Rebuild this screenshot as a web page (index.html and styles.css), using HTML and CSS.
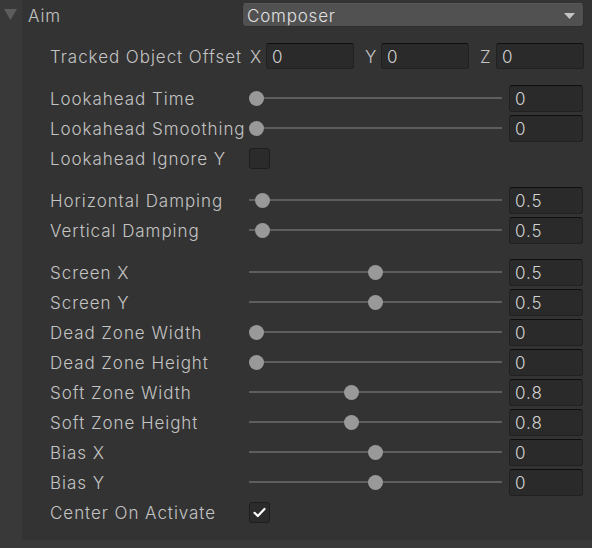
FILE: index.html
```html
<!DOCTYPE html>
<html>
<head>
<meta charset="utf-8">
<link rel="stylesheet" href="styles.css">
</head>
<body>
<div class="inspector">
  <div class="gutter">
    <svg class="foldout" width="13" height="11" viewBox="0 0 13 11"><path d="M0 0 H13 L6.5 11 Z" fill="#5d5d5d"/></svg>
  </div>
  <div class="panel">
    <div class="header">
      <span class="header-label">Aim</span>
      <div class="dropdown">
        <span>Composer</span>
        <svg width="11" height="6" viewBox="0 0 11 6"><path d="M0 0 H11 L5.5 6 Z" fill="#c4c4c4"/></svg>
      </div>
    </div>

    <div class="group">
      <div class="row">
        <span class="label">Tracked Object Offset</span>
        <div class="vector">
          <div class="vcell"><span class="axis">X</span><div class="field">0</div></div>
          <div class="vcell"><span class="axis">Y</span><div class="field">0</div></div>
          <div class="vcell"><span class="axis">Z</span><div class="field">0</div></div>
        </div>
      </div>
    </div>

    <div class="group">
      <div class="row">
        <span class="label">Lookahead Time</span>
        <div class="slider"><div class="track"><div class="knob" style="--p:0"></div></div><div class="field num">0</div></div>
      </div>
      <div class="row">
        <span class="label">Lookahead Smoothing</span>
        <div class="slider"><div class="track"><div class="knob" style="--p:0"></div></div><div class="field num">0</div></div>
      </div>
      <div class="row">
        <span class="label">Lookahead Ignore Y</span>
        <div class="checkbox"></div>
      </div>
    </div>

    <div class="group">
      <div class="row">
        <span class="label">Horizontal Damping</span>
        <div class="slider"><div class="track"><div class="knob" style="--p:0.025"></div></div><div class="field num">0.5</div></div>
      </div>
      <div class="row">
        <span class="label">Vertical Damping</span>
        <div class="slider"><div class="track"><div class="knob" style="--p:0.025"></div></div><div class="field num">0.5</div></div>
      </div>
    </div>

    <div class="group">
      <div class="row">
        <span class="label">Screen X</span>
        <div class="slider"><div class="track"><div class="knob" style="--p:0.5"></div></div><div class="field num">0.5</div></div>
      </div>
      <div class="row">
        <span class="label">Screen Y</span>
        <div class="slider"><div class="track"><div class="knob" style="--p:0.5"></div></div><div class="field num">0.5</div></div>
      </div>
      <div class="row">
        <span class="label">Dead Zone Width</span>
        <div class="slider"><div class="track"><div class="knob" style="--p:0"></div></div><div class="field num">0</div></div>
      </div>
      <div class="row">
        <span class="label">Dead Zone Height</span>
        <div class="slider"><div class="track"><div class="knob" style="--p:0"></div></div><div class="field num">0</div></div>
      </div>
      <div class="row">
        <span class="label">Soft Zone Width</span>
        <div class="slider"><div class="track"><div class="knob" style="--p:0.4"></div></div><div class="field num">0.8</div></div>
      </div>
      <div class="row">
        <span class="label">Soft Zone Height</span>
        <div class="slider"><div class="track"><div class="knob" style="--p:0.4"></div></div><div class="field num">0.8</div></div>
      </div>
      <div class="row">
        <span class="label">Bias X</span>
        <div class="slider"><div class="track"><div class="knob" style="--p:0.5"></div></div><div class="field num">0</div></div>
      </div>
      <div class="row">
        <span class="label">Bias Y</span>
        <div class="slider"><div class="track"><div class="knob" style="--p:0.5"></div></div><div class="field num">0</div></div>
      </div>
      <div class="row">
        <span class="label">Center On Activate</span>
        <div class="checkbox checked">
          <svg width="13" height="11" viewBox="0 0 13 11"><path d="M1.5 5.8 L4.8 9 L11.5 2" fill="none" stroke="#ffffff" stroke-width="2.2" stroke-linecap="round" stroke-linejoin="round"/></svg>
        </div>
      </div>
    </div>
  </div>
</div>
</body>
</html>
```

FILE: styles.css
```css
html, body {
  margin: 0;
  padding: 0;
  background: #393939;
}

body {
  width: 592px;
  height: 548px;
  overflow: hidden;
  font-family: Inter, "Noto Sans", sans-serif;
  font-size: 17px;
  font-weight: 350;
  letter-spacing: 0.95px;
  color: #c4c4c4;
}

.inspector {
  display: flex;
  height: 540px;
}

.gutter {
  width: 22px;
  flex: none;
}

.foldout {
  display: block;
  margin: 9px 0 0 4px;
}

.panel {
  flex: 1;
  background: #333333;
  display: flex;
  flex-direction: column;
}

.header {
  height: 29px;
  display: flex;
  align-items: center;
  padding-left: 6px;
  box-sizing: border-box;
}

.header-label {
  width: 214px;
  padding-top: 2px;
}

.dropdown {
  width: 342px;
  height: 24px;
  margin-top: 1px;
  box-sizing: border-box;
  background: #515151;
  border: 1px solid #2f2f2f;
  border-top-color: #575757;
  border-radius: 4px;
  display: flex;
  align-items: center;
  justify-content: space-between;
  padding: 1px 8px 0 4px;
  color: #e0e0e0;
  letter-spacing: 0.8px;
}

.group {
  margin-top: 12px;
  padding-left: 28px;
  display: flex;
  flex-direction: column;
}

.row {
  height: 30px;
  display: flex;
  align-items: center;
}

.label {
  width: 199px;
  flex: none;
  white-space: nowrap;
  padding-top: 2px;
}

.vector {
  width: 335px;
  display: grid;
  grid-template-columns: 1fr 1fr 1fr;
  column-gap: 10px;
}

.vcell {
  display: flex;
  align-items: center;
}

.axis {
  width: 16px;
  flex: none;
  padding-left: 1px;
  padding-top: 2px;
}

.field {
  flex: 1;
  height: 26px;
  box-sizing: border-box;
  background: #2a2a2a;
  border: 1px solid #212121;
  border-top-color: #0f0f0f;
  border-radius: 3px;
  padding: 1px 0 0 5px;
  display: flex;
  align-items: center;
  color: #d2d2d2;
}

.slider {
  width: 335px;
  display: flex;
  align-items: center;
}

.track {
  position: relative;
  width: 253px;
  height: 2px;
  background: #5e5e5e;
}

.knob {
  position: absolute;
  top: -6.5px;
  left: calc(var(--p) * (100% - 15px));
  width: 15px;
  height: 15px;
  border-radius: 50%;
  background: #999999;
}

.field.num {
  flex: none;
  width: 74px;
  margin-left: 7px;
  height: 27px;
}

.checkbox {
  width: 21px;
  height: 21px;
  box-sizing: border-box;
  background: #2b2b2b;
  border: 1px solid #1e1e1e;
  border-radius: 3px;
  display: flex;
  align-items: center;
  justify-content: center;
}
```
